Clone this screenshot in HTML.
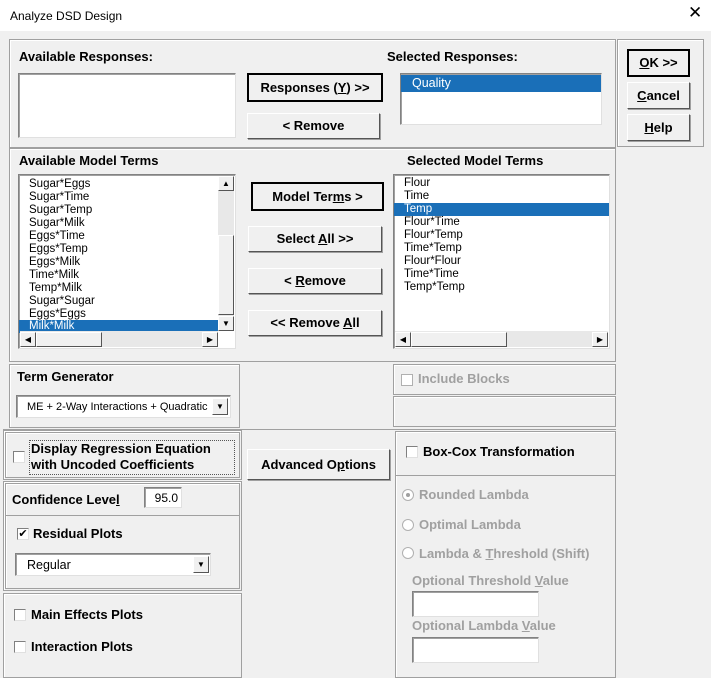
<!DOCTYPE html>
<html><head><style>
*{box-sizing:border-box;margin:0;padding:0}
body{width:711px;height:675px;background:#f0f0f0;position:relative;overflow:hidden;font-family:"Liberation Sans",Arial,sans-serif;font-size:13px;color:#000}
.a{position:absolute}
.t{position:absolute;white-space:nowrap;line-height:14px}
.b{font-weight:bold}
.fr{position:absolute;border:1px solid #a0a0a0;box-shadow:inset 1px 1px 0 #fff}
.lb{position:absolute;background:#fff;border:1px solid #828282;border-right-color:#e0e0e0;border-bottom-color:#e0e0e0;box-shadow:inset 1px 1px 0 #a0a0a0}
.btn{position:absolute;background:#f0f0f0;border:1px solid #fff;border-right-color:#555;border-bottom-color:#555;box-shadow:1px 1px 0 #a0a0a0;font-weight:bold;text-align:center;font-size:13px}
.btn.d{border:2px solid #000;box-shadow:none}
.it{position:absolute;left:0;right:0;height:13px;line-height:13px;font-size:11.5px;padding-left:10px;white-space:nowrap;font-family:"Liberation Sans Narrow","Liberation Sans",sans-serif}
.sel{background:#1a6fb8;color:#fff}
.cb{position:absolute;width:12px;height:12px;background:#fff;border:1px solid #808080;border-right-color:#e0e0e0;border-bottom-color:#e0e0e0}
.g{color:#a0a0a0}
.sb{position:absolute;background:#f0f0f0;border:1px solid #fff;border-right-color:#555;border-bottom-color:#555;font-size:8px;text-align:center;line-height:13px}
</style></head><body>
<div class="a" style="left:0;top:0;width:711px;height:31px;background:#fff"></div>
<div class="t" style="left:10px;top:9px;font-size:12px">Analyze DSD Design</div>
<div class="t" style="left:688px;top:6px;font-size:17px">✕</div>

<!-- frames -->
<div class="fr" style="left:9px;top:39px;width:607px;height:109px"></div>
<div class="fr" style="left:617px;top:39px;width:87px;height:108px"></div>
<div class="fr" style="left:9px;top:148px;width:607px;height:214px"></div>
<div class="fr" style="left:9px;top:364px;width:231px;height:64px"></div>
<div class="fr" style="left:393px;top:364px;width:223px;height:31px"></div>
<div class="fr" style="left:393px;top:396px;width:223px;height:31px"></div>
<div class="fr" style="left:3px;top:430px;width:239px;height:50px"></div>
<div class="fr" style="left:5px;top:432px;width:235px;height:46px"></div>
<div class="fr" style="left:3px;top:481px;width:239px;height:110px"></div>
<div class="fr" style="left:5px;top:483px;width:235px;height:106px"></div>
<div class="a" style="left:5px;top:515px;width:235px;height:1px;background:#a0a0a0"></div>
<div class="fr" style="left:3px;top:593px;width:239px;height:85px"></div>
<div class="fr" style="left:395px;top:431px;width:221px;height:247px"></div>
<div class="a" style="left:395px;top:475px;width:221px;height:1px;background:#a0a0a0"></div>
<div class="a" style="left:3px;top:429px;width:613px;height:1px;background:#a0a0a0"></div>

<!-- responses -->
<div class="t b" style="left:19px;top:50px">Available Responses:</div>
<div class="lb" style="left:18px;top:73px;width:218px;height:65px"></div>
<div class="btn d" style="left:247px;top:73px;width:136px;height:29px;line-height:25px">Responses (<u>Y</u>) &gt;&gt;</div>
<div class="btn" style="left:247px;top:113px;width:133px;height:26px;line-height:24px">&lt; Remove</div>
<div class="t b" style="left:387px;top:50px">Selected Responses:</div>
<div class="lb" style="left:400px;top:73px;width:202px;height:52px"><div class="it sel" style="top:1px;height:17px;line-height:17px;font-size:12.5px;padding-left:11px">Quality</div></div>
<div class="btn d" style="left:627px;top:49px;width:63px;height:28px;line-height:24px"><u>O</u>K &gt;&gt;</div>
<div class="btn" style="left:627px;top:82px;width:63px;height:27px;line-height:25px"><u>C</u>ancel</div>
<div class="btn" style="left:627px;top:114px;width:63px;height:27px;line-height:25px"><u>H</u>elp</div>

<!-- model terms -->
<div class="t b" style="left:19px;top:154px">Available Model Terms</div>
<div class="lb" style="left:18px;top:174px;width:218px;height:175px">
<div class="it" style="top:3px">Sugar*Eggs</div><div class="it" style="top:16px">Sugar*Time</div><div class="it" style="top:29px">Sugar*Temp</div><div class="it" style="top:42px">Sugar*Milk</div><div class="it" style="top:55px">Eggs*Time</div><div class="it" style="top:68px">Eggs*Temp</div><div class="it" style="top:81px">Eggs*Milk</div><div class="it" style="top:94px">Time*Milk</div><div class="it" style="top:107px">Temp*Milk</div><div class="it" style="top:120px">Sugar*Sugar</div><div class="it" style="top:133px">Eggs*Eggs</div><div class="it sel" style="top:145px;right:17px">Milk*Milk</div>
<div class="a" style="left:199px;top:1px;width:16px;height:155px;background:#e8e8e8"></div>
<div class="sb" style="left:199px;top:1px;width:16px;height:15px">▲</div>
<div class="sb" style="left:199px;top:60px;width:16px;height:80px"></div>
<div class="sb" style="left:199px;top:141px;width:16px;height:15px">▼</div>
<div class="a" style="left:1px;top:156px;width:198px;height:16px;background:#e8e8e8"></div>
<div class="sb" style="left:1px;top:157px;width:16px;height:15px">◀</div>
<div class="sb" style="left:17px;top:157px;width:66px;height:15px"></div>
<div class="sb" style="left:183px;top:157px;width:16px;height:15px">▶</div>
</div>
<div class="btn d" style="left:251px;top:182px;width:133px;height:29px;line-height:25px">Model Ter<u>m</u>s &gt;</div>
<div class="btn" style="left:248px;top:226px;width:134px;height:26px;line-height:24px">Select <u>A</u>ll &gt;&gt;</div>
<div class="btn" style="left:248px;top:268px;width:134px;height:26px;line-height:24px">&lt; <u>R</u>emove</div>
<div class="btn" style="left:248px;top:310px;width:134px;height:26px;line-height:24px">&lt;&lt; Remove <u>A</u>ll</div>
<div class="t b" style="left:407px;top:154px">Selected Model Terms</div>
<div class="lb" style="left:393px;top:174px;width:217px;height:175px">
<div class="it" style="top:2px">Flour</div><div class="it" style="top:15px">Time</div><div class="it sel" style="top:28px">Temp</div><div class="it" style="top:41px">Flour*Time</div><div class="it" style="top:54px">Flour*Temp</div><div class="it" style="top:67px">Time*Temp</div><div class="it" style="top:80px">Flour*Flour</div><div class="it" style="top:93px">Time*Time</div><div class="it" style="top:106px">Temp*Temp</div>
<div class="a" style="left:1px;top:156px;width:213px;height:16px;background:#e8e8e8"></div>
<div class="sb" style="left:1px;top:157px;width:16px;height:15px">◀</div>
<div class="sb" style="left:17px;top:157px;width:96px;height:15px"></div>
<div class="sb" style="left:198px;top:157px;width:16px;height:15px">▶</div>
</div>

<!-- term generator -->
<div class="t b" style="left:17px;top:370px">Term Generator</div>
<div class="lb" style="left:16px;top:395px;width:215px;height:23px"><div class="t" style="left:10px;top:4px;font-size:11px;font-family:'Liberation Sans Narrow','Liberation Sans',sans-serif">ME + 2-Way Interactions + Quadratic</div><div class="sb" style="left:195px;top:2px;width:16px;height:17px;line-height:16px">▼</div></div>
<div class="cb" style="left:401px;top:374px;border-color:#b0b0b0"></div>
<div class="t b g" style="left:418px;top:372px">Include Blocks</div>

<!-- display regression -->
<div class="cb" style="left:13px;top:451px"></div>
<div class="a" style="left:29px;top:440px;width:206px;height:35px;border:1px dotted #555"></div>
<div class="t b" style="left:31px;top:442px">Display Regression Equation</div>
<div class="t b" style="left:31px;top:458px">with Uncoded Coefficients</div>
<div class="btn" style="left:247px;top:449px;width:143px;height:31px;line-height:30px">Advanced O<u>p</u>tions</div>

<div class="t b" style="left:12px;top:493px">Confidence Leve<u>l</u></div>
<div class="lb" style="left:144px;top:487px;width:38px;height:21px"><div class="t" style="right:3px;top:3px;font-size:12px">95.0</div></div>
<div class="cb" style="left:17px;top:528px;font-size:11px;line-height:10px;text-align:center">✔</div>
<div class="t b" style="left:33px;top:527px">Residual Plots</div>
<div class="lb" style="left:15px;top:553px;width:196px;height:23px"><div class="t" style="left:11px;top:4px;font-size:12.5px">Regular</div><div class="sb" style="left:177px;top:2px;width:16px;height:17px;line-height:16px">▼</div></div>

<div class="cb" style="left:14px;top:609px"></div>
<div class="t b" style="left:31px;top:608px">Main Effects Plots</div>
<div class="cb" style="left:14px;top:641px"></div>
<div class="t b" style="left:31px;top:640px">Interaction Plots</div>

<!-- box cox -->
<div class="cb" style="left:406px;top:446px"></div>
<div class="t b" style="left:423px;top:445px">Box-Cox Transformation</div>
<div class="a" style="left:402px;top:489px;width:12px;height:12px;border-radius:50%;background:#fff;border:1px solid #b0b0b0"><div class="a" style="left:3px;top:3px;width:4px;height:4px;border-radius:50%;background:#a0a0a0"></div></div>
<div class="t b g" style="left:419px;top:488px">Rounded Lambda</div>
<div class="a" style="left:402px;top:519px;width:12px;height:12px;border-radius:50%;background:#fff;border:1px solid #b0b0b0"></div>
<div class="t b g" style="left:419px;top:518px">Optimal Lambda</div>
<div class="a" style="left:402px;top:547px;width:12px;height:12px;border-radius:50%;background:#fff;border:1px solid #b0b0b0"></div>
<div class="t b g" style="left:419px;top:547px">Lambda &amp; <u>T</u>hreshold (Shift)</div>
<div class="t b g" style="left:412px;top:574px">Optional Threshold <u>V</u>alue</div>
<div class="lb" style="left:412px;top:591px;width:127px;height:26px"></div>
<div class="t b g" style="left:412px;top:619px">Optional Lambda <u>V</u>alue</div>
<div class="lb" style="left:412px;top:637px;width:127px;height:26px"></div>
</body></html>
